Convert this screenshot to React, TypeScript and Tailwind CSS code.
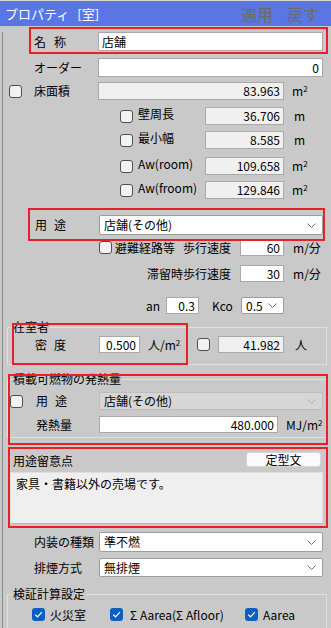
import type { ReactNode } from 'react';

const font = "font-['Noto_Sans_CJK_JP','Liberation_Sans',sans-serif]";

function Check({ checked = false }: { checked?: boolean }) {
    if (checked) {
        return (
            <span className="flex h-[13px] w-[13px] shrink-0 items-center justify-center rounded-[3px] bg-[#0b5fc0]">
                <svg width="9" height="7" viewBox="0 0 9 7">
                    <path d="M1.2 3.6 L3.5 5.8 L7.9 1.2" fill="none" stroke="#ffffff" strokeWidth="1.2" />
                </svg>
            </span>
        );
    }
    return <span className="block h-[13px] w-[13px] shrink-0 rounded-[3px] border border-[#4f4f4f] bg-[#f2f2f2]" />;
}

function Chevron({ light = false }: { light?: boolean }) {
    return (
        <svg width="9" height="5" viewBox="0 0 9 5" className="shrink-0">
            <polyline points="0.5,0.5 4.5,4.5 8.5,0.5" fill="none" stroke={light ? '#b4b4b4' : '#6a6a6a'} strokeWidth="1" />
        </svg>
    );
}

// text box; width/height come in as full class names
function Field({ value, className, disabled = false, left = false }: { value: string; className: string; disabled?: boolean; left?: boolean }) {
    return (
        <div
            className={`flex h-full shrink-0 items-center border border-[#a9a9a9] ${disabled ? 'bg-[#f0f0f0]' : 'bg-white'} ${left ? 'justify-start pl-[3px]' : 'justify-end pr-[3px]'} ${className}`}
        >
            {value}
        </div>
    );
}

function Combo({ value, className, disabled = false }: { value: string; className: string; disabled?: boolean }) {
    return (
        <div
            className={`flex h-full shrink-0 items-center justify-between rounded-[2px] border pl-[4px] pr-[6px] ${disabled ? 'border-[#bdbdbd] bg-[#d6d6d6]' : 'border-[#9c9c9c] bg-white'} ${className}`}
        >
            <span>{value}</span>
            <Chevron light={disabled} />
        </div>
    );
}

function Mark({ className }: { className: string }) {
    return <div className={`pointer-events-none absolute border-2 border-[#e8202a] ${className}`} />;
}

function SubRow({ label, value, unit, gap, mt }: { label: string; value: string; unit: ReactNode; gap: string; mt: string }) {
    return (
        <div className={`flex h-[18px] items-center pl-[117px] ${mt}`}>
            <Check />
            <span className="ml-[5px] w-[67px] -translate-y-[2px]">{label}</span>
            <Field value={value} className="w-[79px]" disabled />
            <span className={gap}>{unit}</span>
        </div>
    );
}

const m2 = (
    <>
        m<sup className="text-[8px]">2</sup>
    </>
);

export default function App() {
    return (
        <div className={`h-[628px] w-[331px] overflow-hidden bg-[#c9c9c9] text-[12px] leading-[14px] text-black ${font}`}>
            {/* title bar */}
            <div className="flex h-[26px] items-center border-t border-[#d8d8d8] bg-[#5a76e4] pl-[5px] pr-[12px]">
                <span className="text-[13px] text-white">プロパティ</span>
                <span className="ml-[8px] text-[13px] text-white">[室]</span>
                <div className="ml-auto flex gap-[14px] text-[16px] leading-[20px] text-[#6c6c64]">
                    <span>適用</span>
                    <span>戻す</span>
                </div>
            </div>

            <div className="ml-[2px] h-[602px] border-l border-[#8a8a8a]">
                {/* 名称 */}
                <div className="relative mt-[6px] flex h-[19px] items-center pl-[31px]">
                    <span className="w-[64px] tracking-[8px]">名称</span>
                    <Field value="店舗" className="w-[225px]" left />
                    <Mark className="left-[26px] top-[-5px] h-[27px] w-[299px]" />
                </div>

                <div className="mt-[7px] flex h-[19px] items-center pl-[31px]">
                    <span className="w-[64px]">オーダー</span>
                    <Field value="0" className="w-[225px]" />
                </div>

                <div className="mt-[5px] flex h-[18px] items-center pl-[6px]">
                    <Check />
                    <span className="ml-[12px] w-[64px]">床面積</span>
                    <Field value="83.963" className="w-[186px]" disabled />
                    <span className="ml-[8px]">{m2}</span>
                </div>

                <SubRow label="壁周長" value="36.706" unit="m" gap="ml-[10px]" mt="mt-[7px]" />
                <SubRow label="最小幅" value="8.585" unit="m" gap="ml-[10px]" mt="mt-[6px]" />
                <SubRow label="Aw(room)" value="109.658" unit={m2} gap="ml-[8px]" mt="mt-[8px]" />
                <SubRow label="Aw(froom)" value="129.846" unit={m2} gap="ml-[8px]" mt="mt-[6px]" />

                {/* 用途 */}
                <div className="relative mt-[16px] flex h-[20px] items-center pl-[32px]">
                    <span className="w-[64px] tracking-[7px]">用途</span>
                    <Combo value="店舗(その他)" className="w-[224px]" />
                    <Mark className="left-[25px] top-[-7px] h-[33px] w-[297px]" />
                </div>

                <div className="mt-[4px] flex h-[17px] items-center pl-[96px]">
                    <Check />
                    <span className="ml-[3px]">避難経路等</span>
                    <span className="ml-[8px]">歩行速度</span>
                    <Field value="60" className="ml-[9px] w-[44px]" />
                    <span className="ml-[9px]">m/分</span>
                </div>

                <div className="mt-[9px] flex h-[17px] items-center pl-[144px]">
                    <span>滞留時歩行速度</span>
                    <Field value="30" className="ml-[9px] w-[44px]" />
                    <span className="ml-[9px]">m/分</span>
                </div>

                <div className="mt-[15px] flex h-[17px] items-center pl-[143px]">
                    <span className="w-[20px]">an</span>
                    <Field value="0.3" className="w-[33px]" />
                    <span className="ml-[13px] w-[29px]">Kco</span>
                    <Combo value="0.5" className="w-[43px]" />
                </div>

                {/* 在室者 */}
                <fieldset className="relative mt-[6px] ml-[4px] w-[320px] border border-[#e0e0e0] pb-[11px]">
                    <legend className="ml-[4px] px-[1px] leading-[14px]">在室者</legend>
                    <div className="mt-[2px] flex h-[17px] items-center pl-[27px]">
                        <span className="w-[64px] tracking-[7px]">密度</span>
                        <Field value="0.500" className="w-[41px]" />
                        <span className="ml-[8px] w-[49px]">人/{m2}</span>
                        <Check />
                        <Field value="41.982" className="ml-[8px] w-[66px]" disabled />
                        <span className="ml-[11px]">人</span>
                    </div>
                    <Mark className="left-[4px] top-[-11px] h-[42px] w-[176px]" />
                </fieldset>

                {/* 積載可燃物の発熱量 */}
                <fieldset className="relative mt-[7px] ml-[4px] w-[320px] border border-[#e0e0e0] pb-[4px]">
                    <legend className="ml-[4px] px-[1px] leading-[14px]">積載可燃物の発熱量</legend>
                    <div className="mt-[6px] flex h-[18px] items-center pl-[2px]">
                        <Check />
                        <span className="ml-[13px] w-[63px] tracking-[7px]">用途</span>
                        <Combo value="店舗(その他)" className="w-[224px]" disabled />
                    </div>
                    <div className="mt-[6px] flex h-[17px] items-center pl-[28px]">
                        <span className="w-[63px]">発熱量</span>
                        <Field value="480.000" className="w-[179px]" />
                        <span className="ml-[8px]">MJ/{m2}</span>
                    </div>
                    <Mark className="left-[0px] top-[-12px] h-[71px] w-[320px]" />
                </fieldset>

                {/* 用途留意点 */}
                <div className="relative mt-[14px]">
                    <div className="flex h-[15px] items-end pl-[10px] pr-[10px]">
                        <span className="leading-[13px]">用途留意点</span>
                        <button className="ml-auto flex h-[15px] w-[75px] items-center justify-center rounded-[3px] border border-[#d6d6d6] bg-[#fafafa] leading-[13px]">
                            定型文
                        </button>
                    </div>
                    <div className="mt-[5px] ml-[7px] h-[52px] w-[313px] border border-[#dedede] border-b-[#b8b8b8] bg-[#efefef] pl-[5px] pt-[4px]">
                        家具・書籍以外の売場です。
                    </div>
                    <Mark className="left-[5px] top-[-5px] h-[81px] w-[320px]" />
                </div>

                <div className="mt-[8px] flex h-[20px] items-center pl-[31px]">
                    <span className="w-[65px]">内装の種類</span>
                    <Combo value="準不燃" className="w-[224px]" />
                </div>
                <div className="mt-[6px] flex h-[19px] items-center pl-[31px]">
                    <span className="w-[65px]">排煙方式</span>
                    <Combo value="無排煙" className="w-[224px]" />
                </div>

                {/* 検証計算設定 */}
                <fieldset className="mt-[10px] ml-[4px] w-[320px] border border-[#e0e0e0] pb-[20px]">
                    <legend className="ml-[4px] px-[1px] leading-[14px]">検証計算設定</legend>
                    <div className="mt-[7px] flex h-[13px] items-center pl-[24px]">
                        <div className="flex w-[78px] items-center">
                            <Check checked />
                            <span className="ml-[5px]">火災室</span>
                        </div>
                        <div className="flex w-[135px] items-center">
                            <Check checked />
                            <span className="ml-[7px]">Σ Aarea(Σ Afloor)</span>
                        </div>
                        <div className="flex items-center">
                            <Check checked />
                            <span className="ml-[5px]">Aarea</span>
                        </div>
                    </div>
                </fieldset>
            </div>
        </div>
    );
}
